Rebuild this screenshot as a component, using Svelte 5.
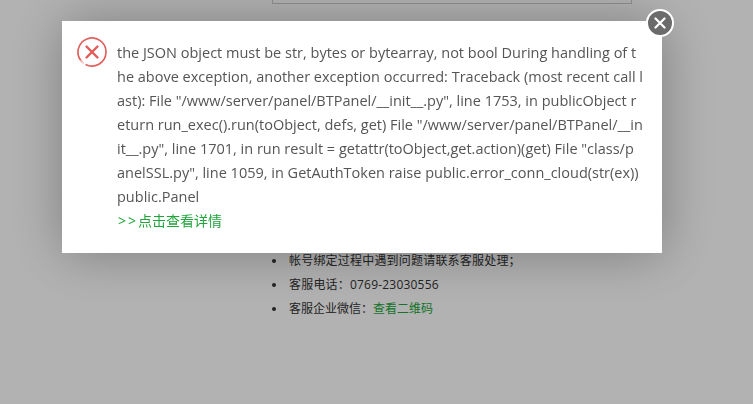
<script lang="ts">
  // wrapped by hand, the original breaks mid-word at the dialog edge
  const lines = [
    'the JSON object must be str, bytes or bytearray, not bool During handling of t',
    'he above exception, another exception occurred: Traceback (most recent call l',
    'ast): File "/www/server/panel/BTPanel/__init__.py", line 1753, in publicObject r',
    'eturn run_exec().run(toObject, defs, get) File "/www/server/panel/BTPanel/__in',
    'it__.py", line 1701, in run result = getattr(toObject,get.action)(get) File "class/p',
    'anelSSL.py", line 1059, in GetAuthToken raise public.error_conn_cloud(str(ex))',
    'public.Panel',
  ];
</script>

<div class="page">
  <div class="content">
    <div class="field"></div>
    <ul class="help">
      <li>帐号绑定过程中遇到问题请联系客服处理；</li>
      <li>客服电话：0769-23030556</li>
      <li class="wechat">客服企业微信：<span class="qr">查看二维码</span></li>
    </ul>
  </div>
</div>

<div class="shade"></div>

<div class="dialog">
  <svg class="err" viewBox="0 0 32 32" width="32" height="32" aria-hidden="true">
    <path d="M6.2 26 A14 14 0 1 1 9.5 28.4" fill="none" stroke="#e2605c" stroke-width="1.7" />
    <path d="M4.6 24.2 A14 14 0 0 0 8 27.6" fill="none" stroke="#f3c4bc" stroke-width="1.2" />
    <path d="M10.5 10.5 L21.5 21.5 M21.5 10.5 L10.5 21.5" fill="none" stroke="#e35a58" stroke-width="2.4" stroke-linecap="round" />
  </svg>
  <div class="body">
    <p class="msg">
      {#each lines as line}
        <span class="line">{line}</span>
      {/each}
    </p>
    <span class="more"><span class="arrows">&gt;&gt;</span>点击查看详情</span>
  </div>
  <button class="close" aria-label="close">
    <svg viewBox="0 0 12 12" width="12" height="12" aria-hidden="true">
      <path d="M1.5 1.5 L10.5 10.5 M10.5 1.5 L1.5 10.5" stroke="#fff" stroke-width="2.2" stroke-linecap="round" />
    </svg>
  </button>
</div>

<style>
  :global(body) {
    margin: 0;
    background: #fff;
    font-family: "Open Sans", "Noto Sans CJK SC", sans-serif;
    overflow: hidden;
  }

  .page {
    height: 404px;
    overflow: hidden;
  }

  .content {
    width: 360px;
    margin-left: 272px;
  }

  .field {
    height: 4px;
    border: 1px solid #ccc;
    border-top: none;
    box-sizing: border-box;
  }

  .help {
    margin: 245px 0 0;
    padding: 0;
    list-style: none;
    font-size: 12px;
    line-height: 24px;
    letter-spacing: 0.2px;
    color: #333;
  }

  .help li {
    display: flex;
    align-items: center;
  }

  .help li::before {
    content: "";
    flex: none;
    width: 4px;
    height: 4px;
    margin-right: 13px;
    border-radius: 50%;
    background: #333;
  }

  .help .wechat {
    letter-spacing: 0;
  }

  .qr {
    color: #20a53a;
  }

  /* --- Overlay --- */
  .shade {
    position: fixed;
    inset: 0;
    background: rgba(0, 0, 0, 0.3);
  }

  .dialog {
    position: fixed;
    left: 62px;
    top: 21px;
    width: 600px;
    height: 232px;
    box-sizing: border-box;
    display: flex;
    background: #fff;
    padding: 20px 21px 0 14px;
    gap: 9px;
    box-shadow: 1px 1px 50px rgba(0, 0, 0, 0.3);
  }

  .err {
    flex: none;
    margin-top: -5px;
  }

  .body {
    min-width: 0;
    flex: 1;
  }

  .msg {
    margin: 0;
    font-size: 14.5px;
    line-height: 24px;
    color: #555;
  }

  .line {
    display: block;
    white-space: nowrap;
  }

  .more {
    display: block;
    font-size: 14px;
    line-height: 24px;
    color: #20a53a;
  }

  .arrows {
    margin-left: 1px;
    letter-spacing: 2px;
  }

  .close {
    position: absolute;
    right: -12px;
    top: -12px;
    width: 28px;
    height: 28px;
    box-sizing: border-box;
    padding: 0;
    display: flex;
    align-items: center;
    justify-content: center;
    border: 2px solid #fff;
    border-radius: 50%;
    background: #6b6b6b;
  }
</style>
